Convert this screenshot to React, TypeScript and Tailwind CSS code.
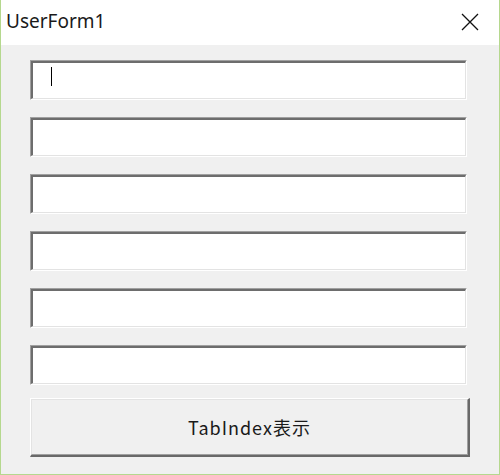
import React from 'react';

const boxes = [0, 1, 2, 3, 4, 5];

function TextBox({ focused }: { focused?: boolean }) {
  return (
    <div className="w-[437px] h-[40px] border-t border-l border-[#a0a0a0] border-r border-b border-r-white border-b-white">
      <div className="h-full border-t-2 border-l-2 border-[#6d6d6d] border-r border-b border-r-[#e3e3e3] border-b-[#e3e3e3] bg-white relative">
        {focused && <div className="absolute left-[18px] top-[4px] w-px h-[19px] bg-black" />}
      </div>
    </div>
  );
}

export default function App() {
  return (
    <div className="w-[500px] h-[475px] border-x border-b border-[#b5d88e] flex flex-col bg-[#f0f0f0]">
      {/* タイトルバー */}
      <div className="h-[45px] bg-white flex items-center justify-between pl-[5px] pr-[20px]">
        <span className="text-[19px] text-[#1a1a1a] font-['Noto_Sans',sans-serif] leading-none pb-[2px]">
          UserForm1
        </span>
        <svg width="18" height="18" viewBox="0 0 18 18" className="mb-[1px]">
          <path d="M1 1L17 17M17 1L1 17" stroke="#111" strokeWidth="1.3" fill="none" />
        </svg>
      </div>

      {/* フォーム本体 */}
      <div className="flex flex-col pl-[29px] pt-[15px] gap-[17px]">
        {boxes.map((i) => (
          <TextBox key={i} focused={i === 0} />
        ))}
        <div className="w-[440px] h-[59px] mt-[-4px] border-t border-l border-white border-r-2 border-b-2 border-r-[#696969] border-b-[#696969]">
          <div className="h-full border-t border-l border-[#e3e3e3] border-r border-b border-r-[#a0a0a0] border-b-[#a0a0a0] bg-[#f0f0f0] flex items-center justify-center">
            <span className="text-[18px] tracking-[1px] text-[#1a1a1a] font-['Noto_Sans_CJK_JP',sans-serif] pt-[1px]">
              TabIndex表示
            </span>
          </div>
        </div>
      </div>
    </div>
  );
}
